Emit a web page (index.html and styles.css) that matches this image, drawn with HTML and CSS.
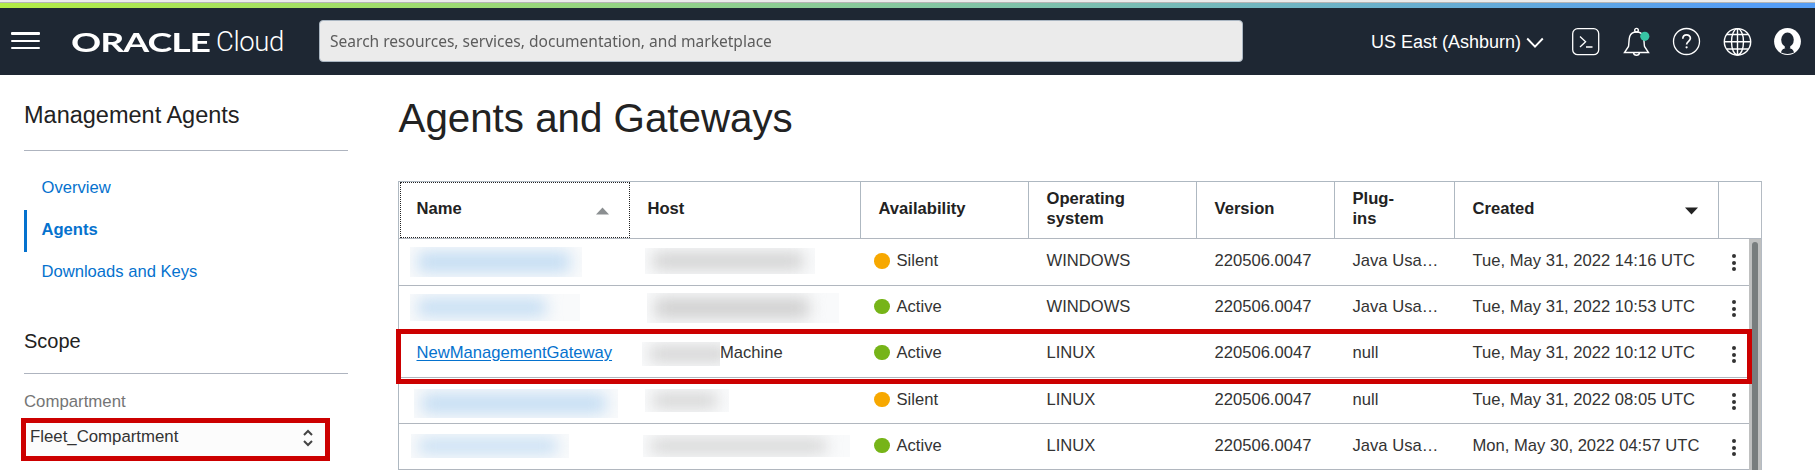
FILE: index.html
```html
<!DOCTYPE html>
<html lang="en">
<head>
<meta charset="utf-8">
<title>Agents and Gateways</title>
<link rel="stylesheet" href="styles.css">
</head>
<body>
<div class="accent"></div>
<header class="topbar">
  <div class="menu"><span></span><span></span><span></span></div>
  <div class="brand"><span class="oracle"><b>ORACLE</b></span><span class="cloud">Cloud</span></div>
  <div class="search"><span>Search resources, services, documentation, and marketplace</span></div>
  <div class="region"><span>US East (Ashburn)</span>
    <svg width="18" height="12" viewBox="0 0 18 12"><path d="M1.2 1.5 9 9.7l7.800-8.200" fill="none" stroke="#fff" stroke-width="1.900"/></svg>
  </div>
  <div class="icons">
    <svg width="30" height="30" viewBox="0 0 30 30" fill="none" stroke="#fff" stroke-width="1.300"><rect x="1.700" y="1.700" width="26" height="26" rx="5"/><path d="M9 9.500l5.600 5.200L9 20M15 20h6.500"/></svg>
    <svg width="30" height="30" viewBox="0 0 30 30" fill="none" stroke="#fff" stroke-width="1.400"><circle cx="14.500" cy="3.200" r="1.800"/><path d="M2.500 25.500h24L22.500 19.500c-.5-3-.3-7-1.200-10C20.300 6.500 18 5 14.500 5S8.700 6.500 7.700 9.500c-.9 3-.7 7-1.200 10zM11.500 25.700c.4 3.400 5.600 3.400 6 0"/><circle cx="22.800" cy="9.300" r="4.600" fill="#38c5a5" stroke="none"/></svg>
    <svg width="30" height="30" viewBox="0 0 30 30" fill="none" stroke="#fff" stroke-width="1.300"><circle cx="14.500" cy="14.500" r="13"/><path stroke-width="1.700" d="M10.800 11.800c0-5.200 7.600-5 7.600-.5 0 3-3.800 3-3.800 6.300"/><circle cx="14.600" cy="20.300" r="1.100" fill="#fff" stroke="none"/></svg>
    <svg width="30" height="30" viewBox="0 0 30 30" fill="none" stroke="#fff" stroke-width="1.400"><circle cx="14.500" cy="14.800" r="13.200"/><ellipse cx="14.500" cy="14.800" rx="6" ry="13.200"/><path d="M14.500 1.600v26.400M1.300 14.800h26.400M4 7.500h21M4 22h21"/></svg>
    <svg width="30" height="30" viewBox="0 0 30 30"><circle cx="14.500" cy="14.500" r="13.400" fill="#fff"/><ellipse cx="14.500" cy="12.800" rx="6.300" ry="7.300" fill="#1e2733"/><path d="M11.800 18h5.400v3.500h-5.400z" fill="#1e2733"/><path d="M8 25.600c.6-3.400 3-4.200 6.500-4.800 3.500.6 5.900 1.400 6.500 4.800-4 1.900-9 1.900-13 0z" fill="#1e2733"/></svg>
  </div>
</header>
<div class="page">
  <aside class="side">
    <h2 class="side-title">Management Agents</h2>
    <nav class="nav">
      <a>Overview</a>
      <a class="current">Agents</a>
      <a>Downloads and Keys</a>
    </nav>
    <h3 class="scope">Scope</h3>
    <label class="label">Compartment</label>
    <div class="select"><span>Fleet_Compartment</span>
      <svg width="10" height="18" viewBox="0 0 10 18" fill="none" stroke="#444" stroke-width="2"><path d="M1 6l4-4 4 4M1 12l4 4 4-4"/></svg>
    </div>
  </aside>
  <main class="main">
    <h1 class="title">Agents and Gateways</h1>
    <div class="table">
      <div class="row head">
        <div class="focus">Name<svg width="13" height="8" viewBox="0 0 13 8"><path d="M0 7.500 6.500.5 13 7.500z" fill="#8b8f91"/></svg></div>
        <div>Host</div><div>Availability</div><div>Operating<br>system</div><div>Version</div><div>Plug-<br>ins</div>
        <div class="created">Created<svg width="13" height="8" viewBox="0 0 13 8"><path d="M0 .5 6.500 7.500 13 .5z" fill="#222"/></svg></div><div></div>
      </div>
      <div class="body">
        <div class="rows">
          <div class="row"><div class="hidden name n1"></div><div class="hidden host h1"></div><div class="status silent">Silent</div><div>WINDOWS</div><div>220506.0047</div><div>Java Usa…</div><div>Tue, May 31, 2022 14:16 UTC</div><div class="dots"><i></i><i></i><i></i></div></div>
          <div class="row raised"><div class="hidden name n2"></div><div class="hidden host h2"></div><div class="status">Active</div><div>WINDOWS</div><div>220506.0047</div><div>Java Usa…</div><div>Tue, May 31, 2022 10:53 UTC</div><div class="dots"><i></i><i></i><i></i></div></div>
          <div class="row raised marked"><div><a class="link">NewManagementGateway</a></div><div class="machine"><span class="hidden host h3"></span><span>Machine</span></div><div class="status">Active</div><div>LINUX</div><div>220506.0047</div><div>null</div><div>Tue, May 31, 2022 10:12 UTC</div><div class="dots"><i></i><i></i><i></i></div></div>
          <div class="row"><div class="hidden name n4"></div><div class="hidden host h4"></div><div class="status silent">Silent</div><div>LINUX</div><div>220506.0047</div><div>null</div><div>Tue, May 31, 2022 08:05 UTC</div><div class="dots"><i></i><i></i><i></i></div></div>
          <div class="row"><div class="hidden name n5"></div><div class="hidden host h5"></div><div class="status">Active</div><div>LINUX</div><div>220506.0047</div><div>Java Usa…</div><div>Mon, May 30, 2022 04:57 UTC</div><div class="dots"><i></i><i></i><i></i></div></div>
        </div>
        <div class="scroll"><span></span></div>
      </div>
    </div>
  </main>
</div>
</body>
</html>
```
FILE: styles.css
```css
*, *::before, *::after { box-sizing: border-box; }
body { margin: 0; height: 470px; overflow: hidden; background: #fff; color: #333; font: 16.6px/20px "Liberation Sans", Arial, sans-serif; }
h1, h2, h3 { margin: 0; font-weight: 400; color: #222; }
.accent { height: 8px; border-top: 2px solid #ebebeb; background: linear-gradient(#b5b5b5 1px, transparent 1px), linear-gradient(90deg, #b2ec45, #8acb97 45%, #6bb1c9 75%, #559df5 96%); }
.topbar { height: 67px; background: #1e2733; display: flex; align-items: flex-start; color: #fff; }
.menu { margin: 24px 0 0 11px; width: 29px; display: flex; flex-direction: column; gap: 5px; }
.menu span { height: 2px; background: #fff; border-radius: 1px; }
.menu span:first-child { height: 3px; }
.brand { width: 279px; padding-left: 31px; height: 67px; display: flex; flex: none; white-space: nowrap; }
.oracle { width: 145px; padding-top: 16px; font: 26.500px/36px Lato, sans-serif; }
.oracle b { display: block; width: max-content; transform: scaleX(1.41); transform-origin: 0 0; font-weight: 700; letter-spacing: -.7px; }
.cloud { padding-top: 16px; font: 300 27.500px/36px Roboto, sans-serif; letter-spacing: -.4px; }
.search { width: 924px; height: 42px; margin-top: 12px; border: 1px solid #aab6c2; border-radius: 4px; background: #ebebeb; color: #5c5c5c; padding-left: 10px; font: 16.500px/40px "Noto Sans", sans-serif; }
.search span { display: block; width: max-content; transform: scaleX(.942); transform-origin: 0 0; }
.region { margin: 24px 0 0 128px; width: 200px; display: flex; gap: 5px; white-space: nowrap; font-size: 18px; }
.region svg { margin-top: 5px; }
.icons { display: flex; gap: 20.500px; padding-top: 19px; }
.page { display: flex; }
.side { width: 374px; padding-left: 24px; flex: none; }
.side-title { width: 324px; height: 76px; padding-top: 25px; font-size: 23.500px; line-height: 30px; border-bottom: 1px solid #aeb4bf; }
.nav { padding-top: 17px; display: flex; flex-direction: column; color: #0572ce; }
.nav a { height: 42px; line-height: 40px; padding-left: 17.500px; }
.nav .current { border-left: 3px solid #0572ce; padding-left: 14.500px; font-weight: 700; }
.scope { width: 324px; height: 80px; padding-top: 32px; font-size: 20px; line-height: 30px; border-bottom: 1px solid #aeb4bf; }
.label { display: block; padding-top: 18px; height: 44px; color: #757575; font-size: 16.800px; }
.select { width: 309px; height: 43px; margin-left: -3px; border: 5px solid #c00; background: #fcfcfc; display: flex; justify-content: space-between; padding: 4px 12px 0 4px; font-size: 16.800px; }
.select svg { margin-top: 2px; }
.main { padding-left: 24px; }
.title { height: 106px; padding-top: 20px; padding-left: .5px; font-size: 40.300px; line-height: 48px; }
.table { width: 1364px; border: 1px solid #aeb8c1; border-right-color: #b4bbc3; }
.row { display: grid; grid-template-columns: 231px 231px 168px 168px 138px 120px 264px 30px; height: 46px; border-bottom: 1px solid #b1b7bf; white-space: nowrap; }
.row:first-child { height: 47px; }
.row > div { padding-left: 17.500px; line-height: 43px; }
.row.raised > div { line-height: 42px; }
.row.head { height: 57px; grid-template-columns: 231px 231px 168px 168px 138px 120px 264px 42px; font-weight: 700; color: #222; }
.row.head > div { display: flex; align-items: center; line-height: 20px; border-right: 1px solid #aeb8c1; padding: 0 0 2px 17.500px; }
.row.head > div:last-child { border-right: 0; }
.head svg { margin: 3px 20px 0 auto; }
.row.head > .focus { margin-left: 1px; border: 1px dotted #222; padding-left: 15.500px; }
.body { display: flex; }
.rows { width: 1350px; }
.rows .row { width: 1350px; }
.scroll { width: 12px; height: 231px; background: #bfc0c0; padding: 3px 3px 0; }
.scroll span { display: block; height: 230px; background: #787d7e; border-radius: 3px 3px 0 0; }
.row > .status { display: flex; align-items: center; gap: 7px; padding: 0 0 2px 13px; line-height: 20px; }
.row.raised > .status { padding-bottom: 4px; line-height: 20px; }
.status::before { content: ""; width: 15.500px; height: 15.500px; border-radius: 50%; background: #76b418; }
.status.silent::before { background: #f7a800; }
.row > .dots { display: flex; flex-direction: column; align-items: center; gap: 2.500px; padding: 15px 0 0 0; }
.row.raised > .dots { padding-top: 14px; }
.dots i { width: 4px; height: 4px; border-radius: 50%; background: #333; }
.link { color: #0572ce; text-decoration: underline; text-underline-offset: 2px; }
.marked { position: relative; }
.marked::after { content: ""; position: absolute; left: -3px; top: -3px; width: 1356px; height: 55px; border: 5px solid #c00; z-index: 2; }
.row .hidden { position: relative; overflow: hidden; padding: 0; background: #f9fafb; }
.hidden::after { content: ""; position: absolute; inset: 5px 12px 5px 8px; background: #c2dcf3; filter: blur(8px); }
.host::after { background: #cecece; }
.n1 { margin: 8px 0 0 11px; width: 172px; height: 30px; }
.h1 { margin: 9px 0 0 15px; width: 170px; height: 26px; }
.n2 { margin: 8px 0 0 11px; width: 170px; height: 27px; }
.n2::after { right: 34px; }
.h2 { margin: 7px 0 0 17px; width: 192px; height: 30px; }
.h2::after { right: 30px; }
.row > .machine { display: flex; padding-left: 12px; }
.h3 { margin-top: 10px; width: 78px; height: 24px; }
.h3::after { right: -8px; }
.n4 { margin: 11px 0 0 15px; width: 204px; height: 29px; }
.h4 { margin: 11px 0 0 15px; width: 84px; height: 23px; }
.n5 { margin: 10px 0 0 12px; width: 158px; height: 24px; }
.h5 { margin: 11px 0 0 13px; width: 207px; height: 22px; }
.h5::after { right: 24px; }
```
